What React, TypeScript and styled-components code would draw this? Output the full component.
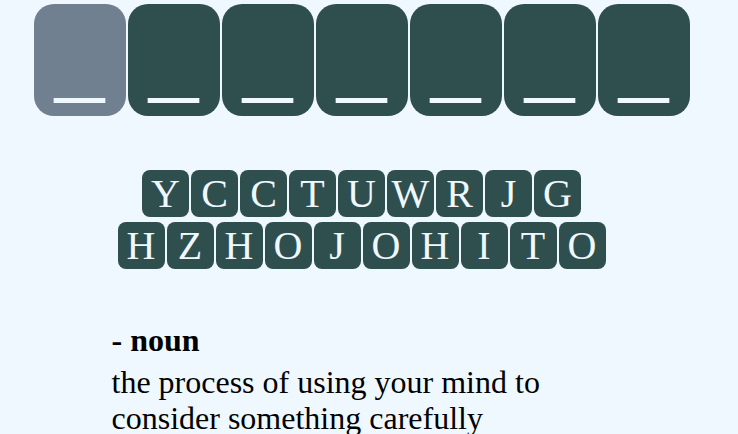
import React from 'react';
import styled, {createGlobalStyle} from 'styled-components';

const GlobalStyle = createGlobalStyle`
  html {
    overflow: hidden;
  }
  body {
    margin: 0;
    background-color: aliceblue;
    font-family: "Liberation Serif", "Times New Roman", serif;
  }
`;

const Page = styled.div`
  width: 707px;
  padding: 4px 8px 0 8px;
  display: flex;
  flex-direction: column;
  align-items: center;
`;

const Board = styled.div`
  display: flex;
  gap: 2px;
`;

const Slot = styled.div<{active?: boolean}>`
  width: 92px;
  height: 112px;
  border-radius: 20px;
  background-color: ${props => props.active ? 'slategray' : 'darkslategray'};
  color: aliceblue;
  font-size: 100px;
  line-height: 106px;
  text-align: center;
`;

const Letters = styled.div`
  margin-top: 54px;
  display: flex;
  flex-direction: column;
  align-items: center;
  gap: 5px;
`;

const LetterRow = styled.div`
  display: flex;
  gap: 2px;
`;

const Letter = styled.div`
  width: 47px;
  height: 47px;
  border-radius: 8px;
  background-color: darkslategray;
  color: aliceblue;
  font-size: 40px;
  line-height: 47px;
  text-align: center;
`;

const Definition = styled.div`
  width: 500px;
  margin-top: 53px;
  font-size: 32px;
  color: black;
`;

const PartOfSpeech = styled.div`
  font-weight: bold;
  line-height: 37px;
`;

const Meaning = styled.p`
  margin: 5px 0 0 0;
  line-height: 36px;
`;

const rows = [
  ['Y', 'C', 'C', 'T', 'U', 'W', 'R', 'J', 'G'],
  ['H', 'Z', 'H', 'O', 'J', 'O', 'H', 'I', 'T', 'O'],
];

const App = () => {
  const slots = Array.from({length: 7});
  return (
    <>
      <GlobalStyle />
      <Page>
        <Board>
          {slots.map((_, i) => (
            <Slot key={i} active={i === 0}>_</Slot>
          ))}
        </Board>
        <Letters>
          {rows.map((row, r) => (
            <LetterRow key={r}>
              {row.map((ch, i) => (
                <Letter key={i}>{ch}</Letter>
              ))}
            </LetterRow>
          ))}
        </Letters>
        <Definition>
          <PartOfSpeech>- noun</PartOfSpeech>
          <Meaning>the process of using your mind to consider something carefully</Meaning>
        </Definition>
      </Page>
    </>
  );
}

export default App;
